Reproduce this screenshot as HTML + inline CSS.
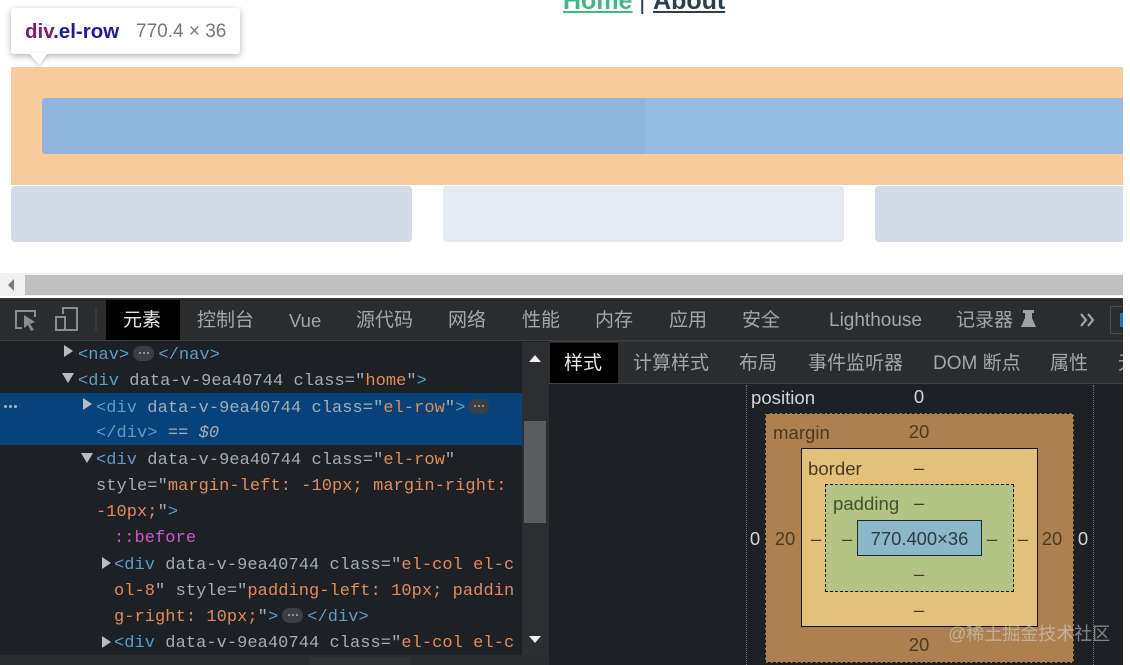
<!DOCTYPE html>
<html lang="zh">
<head>
<meta charset="utf-8">
<title>DevTools</title>
<style>
html,body{margin:0;padding:0;background:#fff;}
#p{position:relative;width:1130px;height:665px;overflow:hidden;background:#fff;font-family:"Liberation Sans","Noto Sans CJK SC",sans-serif;}
.a{position:absolute;}
.tab{position:absolute;white-space:nowrap;font-size:19px;line-height:26px;color:#a4a7aa;}
.m{position:absolute;white-space:pre;font-family:"Liberation Mono","Noto Sans CJK SC",monospace;font-size:17px;letter-spacing:.06px;line-height:26px;height:26px;color:#a4adb6;}
.b{color:#5a9fc4;} .o{color:#e38c5a;} .g{color:#a4adb6;}
.n{position:absolute;font-size:18.5px;line-height:22px;height:22px;width:40px;margin-left:-20px;text-align:center;color:#4b3a22;}
.l{position:absolute;font-size:18.6px;line-height:22px;height:22px;white-space:nowrap;}
.pill{display:inline-block;width:21px;height:15px;border-radius:8px;background:#3b3f43;vertical-align:-2px;position:relative;}
.pill:after{content:"";position:absolute;left:6px;top:6px;width:2px;height:2px;background:#aaa;box-shadow:4px 0 #aaa,8px 0 #aaa;border-radius:1px;}
</style>
</head>
<body>
<div id="p">
  <!-- page -->
  <div class="a" style="left:563px;top:-14px;font-size:25px;font-weight:bold;line-height:30px;white-space:nowrap;color:#2c3e50;"><span style="color:#42b983;text-decoration:underline;">Home</span><span style="font-weight:normal;font-size:24px;margin-right:1px;"> | </span><span style="text-decoration:underline;">About</span></div>

  <div class="a" style="left:11px;top:67px;width:1112px;height:118px;background:#f8cb9c;"></div>
  <div class="a" style="left:42px;top:98px;width:603px;height:56px;background:#8fb5dc;border-radius:3px 0 0 3px;"></div>
  <div class="a" style="left:645px;top:98px;width:478px;height:56px;background:#95bbe2;"></div>
  <div class="a" style="left:11px;top:186px;width:401px;height:56px;background:#d3dce6;border-radius:4px;"></div>
  <div class="a" style="left:443px;top:186px;width:401px;height:56px;background:#e5e9f2;border-radius:4px;"></div>
  <div class="a" style="left:875px;top:186px;width:248px;height:56px;background:#d3dce6;border-radius:4px 0 0 4px;"></div>

  <!-- tooltip -->
  <div class="a" style="left:11px;top:8px;width:229px;height:46px;background:#fff;border-radius:3px;box-shadow:0 2px 7px rgba(0,0,0,.3);"></div>
  <svg class="a" style="left:11px;top:50px;filter:drop-shadow(0 2px 2px rgba(0,0,0,.18));" width="50" height="20"><path d="M18 3H37L28 15Z" fill="#fff"/></svg>
  <div class="a" style="left:25px;top:20px;font-size:20.5px;font-weight:bold;line-height:24px;white-space:nowrap;"><span style="color:#881280;">div</span><span style="color:#1a1aa6;">.el-row</span></div>
  <div class="a" style="left:136px;top:20px;font-size:19px;line-height:24px;white-space:nowrap;color:#777;">770.4 × 36</div>

  <!-- page scrollbar -->
  <div class="a" style="left:0;top:273px;width:1123px;height:23px;background:#f1f1f1;"></div>
  <div class="a" style="left:25px;top:275px;width:1098px;height:20px;background:#c0c0c0;"></div>
  <svg class="a" style="left:0;top:275px;" width="25" height="20"><path d="M14 4V16L8 10Z" fill="#7b7b7b"/></svg>

  <!-- devtools bg -->
  <div class="a" style="left:0;top:298px;width:1123px;height:367px;background:#1d2025;"></div>
  <div class="a" style="left:0;top:298px;width:1123px;height:43px;background:#2a2c2e;border-top:1px solid #3b3e41;box-sizing:border-box;border-bottom:1px solid #3d4043;"></div>
  <div class="a" style="left:106px;top:300px;width:74px;height:40px;background:#000;"></div>
  <div class="tab" style="left:123px;top:308px;color:#e6e6e6;">元素</div>
  <div class="tab" style="left:197px;top:308px;">控制台</div>
  <div class="tab" style="left:289px;top:308px;font-size:18.5px;">Vue</div>
  <div class="tab" style="left:356px;top:308px;">源代码</div>
  <div class="tab" style="left:448px;top:308px;">网络</div>
  <div class="tab" style="left:522px;top:308px;">性能</div>
  <div class="tab" style="left:595px;top:308px;">内存</div>
  <div class="tab" style="left:669px;top:308px;">应用</div>
  <div class="tab" style="left:742px;top:308px;">安全</div>
  <div class="tab" style="left:829px;top:308px;">Lighthouse</div>
  <div class="tab" style="left:956px;top:308px;">记录器</div>

  <svg class="a" style="left:0;top:298px;" width="1123" height="43" fill="none">
    <!-- inspect icon -->
    <path d="M22 30H16V13H35V19" stroke="#8a8d90" stroke-width="2"/>
    <path d="M24 17L35 24L30 26L34 32L31 33L28 27L24 30Z" fill="#8a8d90"/>
    <!-- device icon -->
    <path d="M63 16V10H77V32H62" stroke="#8a8d90" stroke-width="2"/>
    <rect x="56" y="19" width="9" height="13" stroke="#8a8d90" stroke-width="2"/>
    <path d="M96 10V33" stroke="#44474a" stroke-width="1"/>
    <!-- flask -->
    <path d="M1023 12H1034V15H1032V20L1036 29H1021L1025 20V15H1023Z" fill="#a0a3a6"/>
    <!-- chevrons -->
    <path d="M1081 16L1086 22L1081 28M1088 16L1093 22L1088 28" stroke="#a0a3a6" stroke-width="2.2"/>
    <rect x="1110.5" y="8.5" width="20" height="27" rx="1" stroke="#4a4d50"/>
    <rect x="1120" y="15" width="3" height="14" fill="#1a73d6"/>
  </svg>

  <!-- elements panel -->
  <div class="a" style="left:0;top:393px;width:522px;height:52px;background:#07437a;"></div>
  <div class="a" style="left:4px;top:405px;width:3px;height:3px;background:#a9b4c0;box-shadow:5px 0 #a9b4c0,10px 0 #a9b4c0;border-radius:2px;"></div>

  <div class="m" style="left:78px;top:343px;"><span class="b">&lt;nav&gt;</span><span class="pill" style="margin-left:4px;"></span><span class="b" style="margin-left:4px;">&lt;/nav&gt;</span></div>
  <div class="m" style="left:78px;top:369px;"><span class="b">&lt;div</span> data-v-9ea40744 class=<span class="g">"</span><span class="o">home</span><span class="g">"</span><span class="b">&gt;</span></div>
  <div class="m" style="left:96px;top:396px;"><span class="b">&lt;div</span> data-v-9ea40744 class=<span class="g">"</span><span class="o">el-row</span><span class="g">"</span><span class="b">&gt;</span><span class="pill" style="margin-left:3px;"></span></div>
  <div class="m" style="left:96px;top:421px;"><span class="b">&lt;/div&gt;</span> == <i>$0</i></div>
  <div class="m" style="left:96px;top:448px;"><span class="b">&lt;div</span> data-v-9ea40744 class=<span class="g">"</span><span class="o">el-row</span><span class="g">"</span></div>
  <div class="m" style="left:96px;top:474px;">style=<span class="g">"</span><span class="o">margin-left: -10px; margin-right:</span></div>
  <div class="m" style="left:96px;top:500px;"><span class="o">-10px;</span><span class="g">"</span><span class="b">&gt;</span></div>
  <div class="m" style="left:114px;top:526px;color:#d257c9;">::before</div>
  <div class="m" style="left:114px;top:553px;"><span class="b">&lt;div</span> data-v-9ea40744 class=<span class="g">"</span><span class="o">el-col el-c</span></div>
  <div class="m" style="left:114px;top:579px;"><span class="o">ol-8</span><span class="g">"</span> style=<span class="g">"</span><span class="o">padding-left: 10px; paddin</span></div>
  <div class="m" style="left:114px;top:605px;"><span class="o">g-right: 10px;</span><span class="g">"</span><span class="b">&gt;</span><span class="pill" style="margin-left:4px;"></span><span class="b" style="margin-left:4px;">&lt;/div&gt;</span></div>
  <div class="m" style="left:114px;top:631px;"><span class="b">&lt;div</span> data-v-9ea40744 class=<span class="g">"</span><span class="o">el-col el-c</span></div>

  <svg class="a" style="left:0;top:341px;" width="550" height="324">
    <g fill="#b9bcbf">
      <path d="M64 4L73 10L64 16Z"/>
      <path d="M62 32H74L68 42Z"/>
      <path d="M83 57L92 63L83 69Z"/>
      <path d="M81 112H93L87 122Z"/>
      <path d="M102 216L111 222L102 228Z"/>
      <path d="M102 295L111 301L102 307Z"/>
    </g>
  </svg>

  <!-- elements scrollbar -->
  <div class="a" style="left:522px;top:342px;width:27px;height:313px;background:#2c2e31;"></div>
  <div class="a" style="left:524px;top:421px;width:22px;height:102px;background:#5b5c5e;"></div>
  <svg class="a" style="left:522px;top:342px;" width="27" height="313"><path d="M7 20H19L13 13Z" fill="#f0f0f0"/><path d="M7 294H19L13 301Z" fill="#f0f0f0"/></svg>
  <div class="a" style="left:0;top:655px;width:549px;height:10px;background:#2a2c2f;"></div>
  <div class="a" style="left:310px;top:657px;width:100px;height:8px;background:#303235;"></div>

  <!-- styles tabs -->
  <div class="a" style="left:549px;top:341px;width:574px;height:43px;background:#2a2c2e;border-bottom:1px solid #3d4043;border-top:1px solid #36393c;box-sizing:border-box;"></div>
  <div class="a" style="left:550px;top:343px;width:68px;height:40px;background:#000;"></div>
  <div class="tab" style="left:564px;top:351px;color:#e6e6e6;">样式</div>
  <div class="tab" style="left:633px;top:351px;">计算样式</div>
  <div class="tab" style="left:739px;top:351px;">布局</div>
  <div class="tab" style="left:808px;top:351px;">事件监听器</div>
  <div class="tab" style="left:933px;top:351px;">DOM 断点</div>
  <div class="tab" style="left:1050px;top:351px;">属性</div>
  <div class="a" style="left:1118px;top:341px;width:5px;height:42px;overflow:hidden;"><div class="tab" style="left:0;top:10px;">无</div></div>

  <!-- box model -->
  <div class="a" style="left:746px;top:385px;width:346px;height:280px;border-left:1px dotted #777;border-right:1px dotted #777;"></div>
  <div class="l" style="left:751px;top:387px;color:#d4d6d8;">position</div>
  <div class="n" style="left:919px;top:386px;color:#d4d6d8;">0</div>

  <div class="a" style="left:765px;top:413px;width:309px;height:250px;box-sizing:border-box;background:#ae8050;border:1px dashed #111;border-radius:2px;"></div>
  <div class="a" style="left:801px;top:448px;width:237px;height:179px;box-sizing:border-box;background:#e2c27a;border:1px solid #111;"></div>
  <div class="a" style="left:825px;top:484px;width:189px;height:108px;box-sizing:border-box;background:#b3c584;border:1px dashed #111;"></div>
  <div class="a" style="left:857px;top:520px;width:125px;height:36px;box-sizing:border-box;background:#8bb7c8;border:1px solid #1a2830;"></div>

  <div class="l" style="left:773px;top:422px;color:#4b3a22;">margin</div>
  <div class="l" style="left:808px;top:458px;color:#4b3a22;">border</div>
  <div class="l" style="left:833px;top:493px;color:#46512c;">padding</div>

  <div class="n" style="left:919px;top:421px;">20</div>
  <div class="n" style="left:919px;top:457px;">–</div>
  <div class="n" style="left:919px;top:492px;">–</div>
  <div class="n" style="left:919px;top:563px;">–</div>
  <div class="n" style="left:919px;top:599px;">–</div>
  <div class="n" style="left:919px;top:634px;">20</div>

  <div class="n" style="left:755px;top:528px;color:#d4d6d8;">0</div>
  <div class="n" style="left:785px;top:528px;">20</div>
  <div class="n" style="left:816px;top:528px;">–</div>
  <div class="n" style="left:847px;top:528px;">–</div>
  <div class="n" style="left:992px;top:528px;">–</div>
  <div class="n" style="left:1023px;top:528px;">–</div>
  <div class="n" style="left:1052px;top:528px;">20</div>
  <div class="n" style="left:1083px;top:528px;color:#d4d6d8;">0</div>
  <div class="a" style="left:857px;top:528px;width:125px;text-align:center;font-size:18.4px;line-height:22px;color:#2b3a42;white-space:nowrap;">770.400×36</div>

  <!-- watermark -->
  <div class="a" style="left:948px;top:622px;font-size:18px;line-height:24px;white-space:nowrap;color:rgba(215,215,215,.55);">@稀土掘金技术社区</div>

  <!-- right edge -->
  <div class="a" style="left:1123px;top:0;width:7px;height:665px;background:#fff;"></div>
</div>
</body>
</html>
